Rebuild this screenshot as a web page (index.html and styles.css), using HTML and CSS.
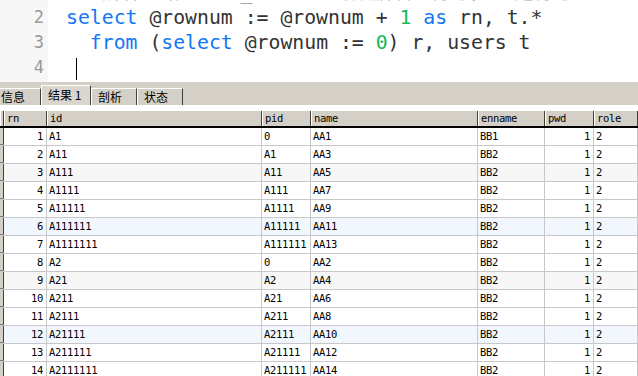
FILE: index.html
```html
<!DOCTYPE html>
<html>
<head>
    <title>Query Result</title>
    <meta charset="UTF-8">
    <link rel="stylesheet" href="styles.css">
</head>
<body>
    <div class="editor">
        <div class="gutter">
            <div class="ln">1</div>
            <div class="ln">2</div>
            <div class="ln">3</div>
            <div class="ln">4</div>
        </div>
        <div class="code">
            <div class="line comment">-- 解释：给users_table里的数据设置行号，rn是行号</div>
            <div class="line"><span class="kw">select</span> @rownum := @rownum + <span class="num">1</span> <span class="kw">as</span> rn, t.*</div>
            <div class="line">  <span class="kw">from</span> (<span class="kw">select</span> @rownum := <span class="num">0</span>) r, users t</div>
            <div class="line"><span class="caret"></span></div>
        </div>
    </div>

    <div class="tabbar">
        <div class="tab first">信息</div>
        <div class="tab active">结果 1</div>
        <div class="tab">剖析</div>
        <div class="tab">状态</div>
    </div>

    <div class="grid">
        <div class="row head">
            <div class="cell ind"></div>
            <div class="cell">rn</div>
            <div class="cell">id</div>
            <div class="cell">pid</div>
            <div class="cell">name</div>
            <div class="cell">enname</div>
            <div class="cell">pwd</div>
            <div class="cell">role</div>
        </div>
        <div class="row"><div class="cell ind"></div><div class="cell r">1</div><div class="cell">A1</div><div class="cell">0</div><div class="cell">AA1</div><div class="cell">BB1</div><div class="cell r">1</div><div class="cell">2</div></div>
        <div class="row"><div class="cell ind"></div><div class="cell r">2</div><div class="cell">A11</div><div class="cell">A1</div><div class="cell">AA3</div><div class="cell">BB2</div><div class="cell r">1</div><div class="cell">2</div></div>
        <div class="row gray"><div class="cell ind"></div><div class="cell r">3</div><div class="cell">A111</div><div class="cell">A11</div><div class="cell">AA5</div><div class="cell">BB2</div><div class="cell r">1</div><div class="cell">2</div></div>
        <div class="row"><div class="cell ind"></div><div class="cell r">4</div><div class="cell">A1111</div><div class="cell">A111</div><div class="cell">AA7</div><div class="cell">BB2</div><div class="cell r">1</div><div class="cell">2</div></div>
        <div class="row"><div class="cell ind"></div><div class="cell r">5</div><div class="cell">A11111</div><div class="cell">A1111</div><div class="cell">AA9</div><div class="cell">BB2</div><div class="cell r">1</div><div class="cell">2</div></div>
        <div class="row blue"><div class="cell ind"></div><div class="cell r">6</div><div class="cell">A111111</div><div class="cell">A11111</div><div class="cell">AA11</div><div class="cell">BB2</div><div class="cell r">1</div><div class="cell">2</div></div>
        <div class="row"><div class="cell ind"></div><div class="cell r">7</div><div class="cell">A1111111</div><div class="cell">A111111</div><div class="cell">AA13</div><div class="cell">BB2</div><div class="cell r">1</div><div class="cell">2</div></div>
        <div class="row"><div class="cell ind"></div><div class="cell r">8</div><div class="cell">A2</div><div class="cell">0</div><div class="cell">AA2</div><div class="cell">BB2</div><div class="cell r">1</div><div class="cell">2</div></div>
        <div class="row gray"><div class="cell ind"></div><div class="cell r">9</div><div class="cell">A21</div><div class="cell">A2</div><div class="cell">AA4</div><div class="cell">BB2</div><div class="cell r">1</div><div class="cell">2</div></div>
        <div class="row"><div class="cell ind"></div><div class="cell r">10</div><div class="cell">A211</div><div class="cell">A21</div><div class="cell">AA6</div><div class="cell">BB2</div><div class="cell r">1</div><div class="cell">2</div></div>
        <div class="row"><div class="cell ind"></div><div class="cell r">11</div><div class="cell">A2111</div><div class="cell">A211</div><div class="cell">AA8</div><div class="cell">BB2</div><div class="cell r">1</div><div class="cell">2</div></div>
        <div class="row blue"><div class="cell ind"></div><div class="cell r">12</div><div class="cell">A21111</div><div class="cell">A2111</div><div class="cell">AA10</div><div class="cell">BB2</div><div class="cell r">1</div><div class="cell">2</div></div>
        <div class="row"><div class="cell ind"></div><div class="cell r">13</div><div class="cell">A211111</div><div class="cell">A21111</div><div class="cell">AA12</div><div class="cell">BB2</div><div class="cell r">1</div><div class="cell">2</div></div>
        <div class="row"><div class="cell ind"></div><div class="cell r">14</div><div class="cell">A2111111</div><div class="cell">A211111</div><div class="cell">AA14</div><div class="cell">BB2</div><div class="cell r">1</div><div class="cell">2</div></div>
    </div>
</body>
</html>
```

FILE: styles.css
```css
/* editor on top, result grid below */
html, body { margin: 0; padding: 0; }
body { width: 638px; height: 376px; overflow: hidden; background: #fff; font-family: "DejaVu Sans Mono", monospace; }

.editor { height: 82px; display: flex; overflow: hidden; background: #fff; }
.gutter { width: 48px; flex-shrink: 0; box-sizing: border-box; padding-right: 4px; margin-top: -20px; background: #f7f7f7; color: #999; text-align: right; font-size: 17px; }
.ln { height: 25px; line-height: 25px; }
.code { margin-top: -20px; padding-left: 18px; font-size: 19.8px; color: #333; }
.line { height: 25px; line-height: 25px; white-space: pre; }
.comment { color: #a8a8a8; font-family: "DejaVu Sans Mono", "Noto Sans CJK SC", monospace; }
.kw { color: #1277f2; }
.num { color: #16b85a; }
.caret { display: inline-block; width: 1px; height: 22px; margin-left: 10px; background: #000; vertical-align: middle; }

.tabbar { height: 23px; display: flex; align-items: flex-end; background: #d4d0c8; font-family: "Noto Sans CJK SC", sans-serif; font-size: 12px; color: #000; }
.tab { height: 17px; line-height: 16px; padding-left: 6px; box-sizing: border-box; border-left: 1px solid #fff; border-top: 1px solid #fff; border-right: 1px solid #404040; width: 46px; white-space: nowrap; }
.tab.first { margin-left: -6px; width: 47px; }
.tab.active { height: 20px; width: 50px; line-height: 17px; padding-left: 6px; background: #dad6ce; }

.grid { border-top: 6px solid #fff; font-size: 10.5px; letter-spacing: -0.3px; color: #000; }
.row { display: grid; grid-template-columns: 4px 43px 215px 49px 167px 67px 49px 1fr; height: 18px; box-sizing: border-box; border-bottom: 1px solid #c8c8c8; }
.row.gray { background: #f7f7f7; }
.row.blue { background: #f2f7fd; }
.cell { box-sizing: border-box; border-right: 1px solid #c8c8c8; padding: 0 2px; line-height: 17px; white-space: nowrap; overflow: hidden; }
.cell.r { text-align: right; padding-right: 3px; }
.cell.ind { padding: 0; background: #d4d0c8; border-right: 1px solid #404040; border-bottom: 1px solid #808080; }

.row.head { height: 17px; background: #d4d0c8; border-bottom: 2px solid #000; }
.head .cell { line-height: 15px; border-right: 1px solid #404040; box-shadow: inset 1px 0 #fff; padding-left: 3px; }
.head .cell.ind { border-bottom: none; }
```
